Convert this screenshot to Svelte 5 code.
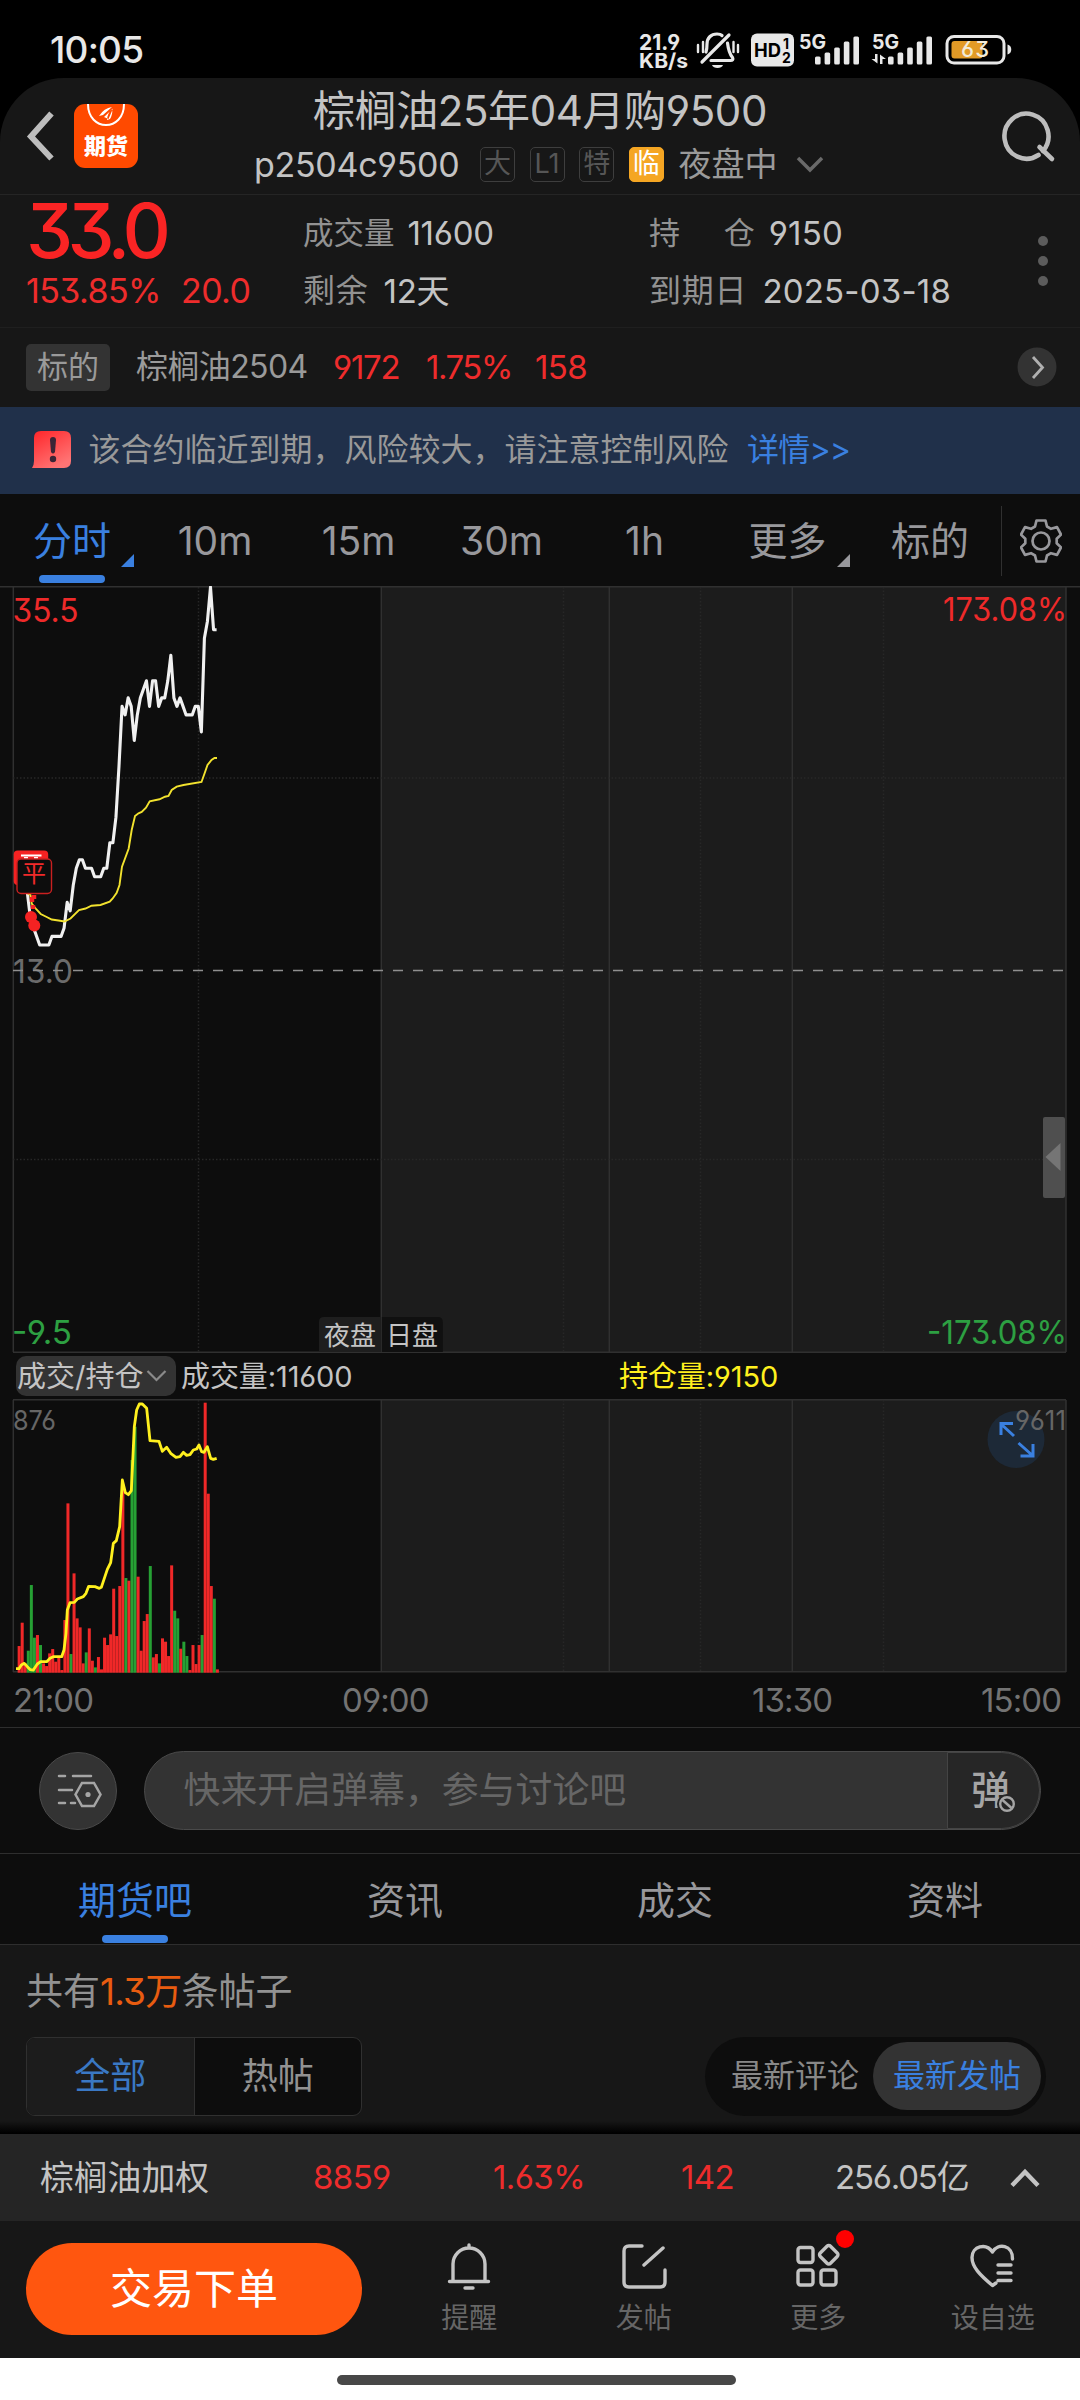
<script lang="ts">
  const periods = [
    { label: "分时", width: 142, active: true, arrow: true },
    { label: "10m", width: 144 },
    { label: "15m", width: 143 },
    { label: "30m", width: 143 },
    { label: "1h", width: 143 },
    { label: "更多", width: 143, arrow: true },
    { label: "标的", width: 142 },
  ];

  const sections = ["期货吧", "资讯", "成交", "资料"];

  // one value per minute from 21:00
  const prices = [
    19, 18.5, 18.5, 18, 17.5, 16, 15.5, 15, 14.5, 14.5, 14.5, 14.5, 15, 15, 15, 15, 15.5, 17, 16.5,
    18, 19, 19.5, 19.5, 19, 19, 19, 18.5, 18.5, 18.5, 19, 19, 20.5, 20.5, 22, 25, 28.5, 28, 29,
    28.5, 26.5, 28, 29, 29.5, 30, 28.5, 30, 30, 28.5, 29, 29, 30, 31.5, 29, 28.5, 29, 28.5, 28, 28,
    28, 28.5, 28.5, 27, 32.5, 33.5, 35.5, 33, 33,
  ];

  const average =
    "17.5,888 30.5,895 31.7,903.5 36.5,909.5 40.7,914 46.7,917 51.7,919.5 58.5,920.5 64.5,921.5 70.5,918.5 79,910 85.5,908.5 91.5,905.7 100.5,905 109.7,901.7 112.7,898.5 116.7,892.7 119.5,885 122,866.7 128.7,848.5 131.7,830 135,816 138.5,813.3 141.7,812 146,807.7 149.7,801.3 159.5,799.3 165,796.7 168.5,796 171.7,790 176.7,786.7 183.5,785 201.5,782 204,775 207.5,765 211.5,760 214.5,758 217,758";

  // negative means the minute closed lower
  const volumes = [
    80, 150, 28, -66, -263, -105, 113, -83, 28, 20, 58, 71, 33, 50, 8, 158, 508, -56, 298, 163,
    136, 28, -61, 133, 36, -16, 47, 10, 105, 83, 115, 252, 110, 260, 548, -284, 276, -638, -738,
    288, 66, 155, 176, -320, 46, 56, -28, 103, 93, 50, 322, -186, -163, 72, -93, -50, 8, 83, 26,
    83, -113, 810, 537, 260, -222, 10,
  ];

  const openInterest =
    "48,866 57,866 64,855 73,850 82,860 91,869 100,870 112,852 122,845 140,845 150,835 160,830 185,830 192,810 198,760 202,690 210,668 223,667 232,657 250,650 258,640 266,619 285,620 298,625 304,622 312,598 322,568 332,548 340,490 349,482 359,440 367,300 376,338 385,344 394,332 403,140 410,90 418,72 427,72 440,85 450,182 477,184 487,214 500,202 512,220 528,232 540,230 550,217 560,226 570,224 580,210 590,207 597,195 605,215 612,217 622,200 632,235 640,238 650,235";

  const minuteX = (i: number) => 15.3 + i * 3.05;
  const priceY = (p: number) => 970.5 - (p - 13) * 17.04;
  const pricePoints = prices.map((p, i) => `${minuteX(i)},${priceY(p)}`).join(" ");
</script>

<div class="screen">
  <div class="status">
    <span class="clock">10:05</span>
    <svg class="status-icons" width="376" height="44" viewBox="638 28 376 44">
      <g fill="#e8e8e8" font-weight="700">
        <text x="639" y="50" font-size="22" textLength="41" lengthAdjust="spacingAndGlyphs">21.9</text>
        <text x="639" y="67.5" font-size="20" textLength="49" lengthAdjust="spacingAndGlyphs">KB/s</text>
        <text x="799" y="48.500" font-size="20" textLength="27" lengthAdjust="spacingAndGlyphs">5G</text>
        <text x="872" y="48.500" font-size="20" textLength="27" lengthAdjust="spacingAndGlyphs">5G</text>
      </g>
      <g fill="none" stroke="#e8e8e8" stroke-width="3.200" stroke-linecap="round">
        <path d="M729 35 702 62M706 52c1-3 1-5 1-8 0-6 4-10 10-10 2 0 4 .5 5 1.500M727.500 43c1 8 2 11 5 14.500 1 2 0 3-2 3H711" />
        <path d="M698 45v7M703 42v10M733.500 42v10M738 45v7" stroke-width="2.400" />
      </g>
      <path d="M712 65h11c-1 4-10 4-11 0z" fill="#e8e8e8" />
      <rect x="751" y="33.500" width="43" height="33" rx="6" fill="#e8e8e8" />
      <g fill="#000" font-weight="700">
        <text x="754" y="56.500" font-size="19" textLength="27" lengthAdjust="spacingAndGlyphs">HD</text>
        <text x="783" y="48.500" font-size="14">1</text>
        <text x="782" y="62.500" font-size="14">2</text>
      </g>
      {#each [815, 888] as left}
        {#each [8, 12, 17, 23, 28] as h, i}
          <rect x={left + i * 9.6} y={64.5 - h} width="5.600" height={h} rx="1.500" fill="#e8e8e8" />
        {/each}
      {/each}
      <path d="M877.500 54v9.500l-6-4.500h3.500v-5zM880 64v-9.500l6 4.500h-3.500v5z" fill="#e8e8e8" />
      <rect x="947" y="36.500" width="57" height="26.500" rx="7" fill="none" stroke="#e8e8e8" stroke-width="3" />
      <path d="M1007.500 44.500c5 1 5 9 0 10z" fill="#e8e8e8" />
      <rect x="951.500" y="41" width="31" height="17.500" rx="3" fill="#e29a26" />
      <text x="961" y="57" font-size="22" font-weight="500" fill="#f2ead8" textLength="28">63</text>
    </svg>
  </div>

  <div class="app">
    <header>
      <svg class="back" width="30" height="52" viewBox="0 0 30 52">
        <path d="M26.500 3.500 6 26.500l20.500 22" fill="none" stroke="#bdbdbd" stroke-width="6" />
      </svg>
      <div class="logo">
        <svg width="64" height="24" viewBox="0 0 64 24">
          <path d="M14 0c0 28 36 28 36 0" fill="none" stroke="#fff" stroke-width="2" />
          <path d="M25 12Q30 4 38 3L29 11zM30 13 39 4.500 34.500 15zM36 15Q39 10 38 5 33 10 33 16z" fill="#fff" />
        </svg>
        <span>期货</span>
      </div>
      <div class="contract">
        <h1>棕榈油25年04月购9500</h1>
        <div class="code-row">
          <span class="code">p2504c9500</span>
          <span class="mark">大</span>
          <span class="mark">L1</span>
          <span class="mark">特</span>
          <span class="mark expiring">临</span>
          <span class="session">夜盘中</span>
          <svg width="28" height="18" viewBox="0 0 28 18">
            <path d="M2 2l12 12L26 2" fill="none" stroke="#6a6a6a" stroke-width="3.500" />
          </svg>
        </div>
      </div>
      <svg class="search" width="54" height="54" viewBox="0 0 54 54">
        <path d="M36.500 46A22 22.500 0 1 1 41 42" fill="none" stroke="#bdbdbd" stroke-width="4.600" stroke-linecap="round" />
        <path d="M37.500 38 50 50" stroke="#bdbdbd" stroke-width="4.600" stroke-linecap="round" />
      </svg>
    </header>

    <section class="quote">
      <div class="last">
        <div class="last-price">33.0</div>
        <div class="change"><span>153.85%</span><span>20.0</span></div>
      </div>
      <div class="stats">
        <div><span class="label tight">成交量</span><b>11600</b></div>
        <div><span class="label">剩余</span><b>12天</b></div>
      </div>
      <div class="stats wide">
        <div><span class="label spread"><i>持</i><i>仓</i></span><b>9150</b></div>
        <div><span class="label">到期日</span><b>2025-03-18</b></div>
      </div>
      <div class="dots"><i></i><i></i><i></i></div>
    </section>

    <section class="underlying">
      <span class="tag">标的</span>
      <span class="name">棕榈油2504</span>
      <span class="up u1">9172</span>
      <span class="up u2">1.75%</span>
      <span class="up u3">158</span>
      <svg width="40" height="40" viewBox="0 0 40 40">
        <circle cx="20" cy="20" r="19.500" fill="#333" />
        <path d="M16 10l9.500 10.500L16 31" fill="none" stroke="#b0b0b0" stroke-width="2.800" />
      </svg>
    </section>

    <section class="alert">
      <svg width="40" height="38" viewBox="0 0 40 38">
        <defs>
          <linearGradient id="warn" x1="0" y1="0" x2=".6" y2="1">
            <stop offset=".1" stop-color="#ff2c30" />
            <stop offset="1" stop-color="#ff7474" />
          </linearGradient>
        </defs>
        <path d="M2 7q0-7 7-7h23q7 0 7 7v23q0 7-7 7H0Q2 34 2 30z" fill="url(#warn)" />
        <path d="M18 9q0-3 3-3t3 3l-1 12q-2 3-4 0z" fill="#3b2536" />
        <circle cx="21" cy="28" r="3.200" fill="#3b2536" />
      </svg>
      <span class="alert-text">该合约临近到期，风险较大，请注意控制风险</span>
      <span class="detail">详情&gt;&gt;</span>
    </section>

    <nav class="periods">
      {#each periods as p}
        <div class="period" class:active={p.active} style="width: {p.width}px">
          <span>{p.label}</span>
          {#if p.arrow}
            <svg class="corner" width="13" height="13"><path d="M13 0v13H0z" fill="currentColor" /></svg>
          {/if}
        </div>
      {/each}
      <div class="settings">
        <svg width="42" height="46" viewBox="-21 -23 42 46" fill="none" stroke="#98989c" stroke-width="2.700" stroke-linejoin="round">
          <path d="M-4.500-20.500h9l1.500 6 4 2.300 6-1.700 4 7.500-4.300 4.200v4.400l4.300 4.200-4 7.500-6-1.700-4 2.300-1.500 6h-9l-1.500-6-4-2.300-6 1.700-4-7.500 4.300-4.200v-4.400l-4.300-4.200 4-7.500 6 1.700 4-2.300z" />
          <circle r="8.500" />
        </svg>
      </div>
    </nav>

    <svg class="price-chart" width="1080" height="767" viewBox="0 586 1080 767">
      <rect x="381" y="586" width="685" height="767" fill="#1c1c1c" />
      <g stroke="#303030" stroke-width="1.500">
        <path d="M0 586.800H1080M13 1352.300H1066M13.300 587V1352M381.300 587V1352M609.300 587V1352M792.300 587V1352M1066 587V1352" />
        <path d="M198.500 587V1352M563.500 587V1352M700.500 587V1352M883.500 587V1352M13 778H1066M13 1159.500H1066" stroke="#272727" stroke-dasharray="1.500 2" />
      </g>
      <g font-size="33">
        <text x="12.500" y="621.500" fill="#ee2a2a" textLength="66" lengthAdjust="spacingAndGlyphs">35.5</text>
        <text x="943" y="621" fill="#ee2a2a" textLength="124" lengthAdjust="spacingAndGlyphs">173.08%</text>
        <text x="13" y="982.500" fill="#6b6b6b" textLength="60" lengthAdjust="spacingAndGlyphs">13.0</text>
        <text x="12" y="1344" fill="#2da042" textLength="60" lengthAdjust="spacingAndGlyphs">-9.5</text>
        <text x="927" y="1344" fill="#2da042" textLength="140" lengthAdjust="spacingAndGlyphs">-173.08%</text>
      </g>
      <path d="M13 970.500H1066" stroke="#8f8f8f" stroke-width="1.600" stroke-dasharray="10 10" />
      <polyline points={pricePoints} fill="none" stroke="#f0f0f0" stroke-width="3.100" stroke-linejoin="round" />
      <polyline points={average} fill="none" stroke="#f2e22e" stroke-width="1.900" />

      <rect x="13.700" y="850.500" width="34.500" height="34.500" rx="4" fill="#f52222" />
      <path d="M21 855.500h20.500M24 858h4M34 858h4" stroke="#fff" stroke-width="1.800" />
      <rect x="17" y="859" width="34.500" height="34.500" rx="4" fill="#0d0d0d" stroke="#c92020" stroke-width="1.400" />
      <text x="22" y="882" font-size="24" fill="#f02a2a">平</text>
      <path d="M34 895v4M32 897v5M33 905v4" stroke="#f52222" stroke-width="4.500" />
      <circle cx="31" cy="917" r="6" fill="#f52222" />
      <circle cx="34.300" cy="925.500" r="6" fill="#f52222" />

      <path d="M381 1352v-35h-57q-5 0-5 5v30z" fill="#1e1e1e" />
      <path d="M381.800 1352v-35h56q5 0 5 5v30z" fill="#101010" />
      <text x="324" y="1344.500" font-size="26" fill="#c4c4c4">夜盘</text>
      <text x="386" y="1344.500" font-size="26" fill="#c4c4c4">日盘</text>
      <rect x="1043" y="1117" width="22" height="81" rx="2" fill="#4f4f4f" />
      <path d="M1060.500 1143v28L1045.500 1157z" fill="#757575" />
    </svg>

    <div class="indicator">
      <div class="selector">
        <span>成交/持仓</span>
        <svg width="22" height="14" viewBox="0 0 22 14">
          <path d="M1.500 2l9 9 9-9" fill="none" stroke="#8a8a8a" stroke-width="2.200" />
        </svg>
      </div>
      <span class="vol-total">成交量:11600</span>
      <span class="oi-total">持仓量:9150</span>
    </div>

    <svg class="volume-chart" width="1080" height="274" viewBox="0 1399 1080 274">
      <rect x="381" y="1399" width="685" height="273" fill="#1c1c1c" />
      <g stroke="#303030" stroke-width="1.500">
        <path d="M13 1399.800H1066M13 1671.800H1066M13.300 1400V1672M381.300 1400V1672M609.300 1400V1672M792.300 1400V1672M1066 1400V1672" />
        <path d="M198.500 1400V1672M563.500 1400V1672M700.500 1400V1672M883.500 1400V1672" stroke="#272727" stroke-dasharray="1.500 2" />
      </g>
      {#each volumes as v, i}
        <rect
          x={minuteX(i + 1) - 0.7}
          y={1672.7 - Math.abs(v) / 3}
          width="3"
          height={Math.abs(v) / 3}
          fill={v > 0 ? "#f02828" : "#26a034"}
        />
      {/each}
      <polyline points={openInterest} transform="translate(0 1380) scale(.33333)" fill="none" stroke="#fff01e" stroke-width="8.500" stroke-linejoin="round" />
      <circle cx="1016" cy="1439.500" r="28.500" fill="#1d2937" />
      <path d="M1014 1436l-13-12M1001 1435v-11.500h12M1018.500 1443l14 12.500M1020.500 1456H1033v-12" fill="none" stroke="#3a80e0" stroke-width="3" />
      <text x="13" y="1430" font-size="27" fill="#666" textLength="43" lengthAdjust="spacingAndGlyphs">876</text>
      <text x="1015" y="1429.500" font-size="27" fill="#666" textLength="51" lengthAdjust="spacingAndGlyphs">9611</text>
    </svg>

    <div class="axis">
      <span>21:00</span>
      <span class="open">09:00</span>
      <span class="noon">13:30</span>
      <span class="close">15:00</span>
    </div>

    <section class="barrage">
      <div class="barrage-settings">
        <svg width="46" height="36" viewBox="0 0 46 36" fill="none" stroke="#a5a5a5" stroke-width="2.500" stroke-linecap="round">
          <path d="M2 3h6M16 3h18M2 17h13M2 30h6M14 30h4" />
          <path d="M25 10h12l6.500 11.500L37 33H25l-6.500-11.500z" />
          <circle cx="31" cy="21.500" r="2.600" fill="#a5a5a5" stroke="none" />
        </svg>
      </div>
      <div class="barrage-input">
        <span class="placeholder">快来开启弹幕，参与讨论吧</span>
        <div class="barrage-toggle">
          <span>弹</span>
          <svg width="22" height="22" viewBox="0 0 22 22">
            <circle cx="11" cy="11" r="10" fill="#262626" />
            <circle cx="11" cy="11" r="6.800" fill="none" stroke="#a5a5a5" stroke-width="2.400" />
            <path d="M6.500 7l9 8" stroke="#a5a5a5" stroke-width="2.400" />
          </svg>
        </div>
      </div>
    </section>

    <nav class="sections">
      {#each sections as s, i}
        <div class:active={i === 0}><span>{s}</span></div>
      {/each}
    </nav>

    <section class="posts">
      <p class="count">共有<em>1.3万</em>条帖子</p>
      <div class="filters">
        <div class="segments">
          <span class="on">全部</span>
          <span>热帖</span>
        </div>
        <div class="sort">
          <span>最新评论</span>
          <span class="on">最新发帖</span>
        </div>
      </div>
    </section>

    <section class="index-bar">
      <span class="i-name">棕榈油加权</span>
      <span class="up">8859</span>
      <span class="up">1.63%</span>
      <span class="up">142</span>
      <span class="turnover">256.05亿</span>
      <svg width="30" height="20" viewBox="0 0 30 20">
        <path d="M2 17.500 15 4l13 13.500" fill="none" stroke="#c4c4c4" stroke-width="4.400" />
      </svg>
    </section>

    <footer>
      <button>交易下单</button>
      <div class="actions">
        <div>
          <svg width="48" height="48" viewBox="0 0 48 48">
            <path d="M8 39V22a16 16 0 0 1 32 0v17M4.500 39.500h39M24 6V3M20 46h8" />
          </svg>
          <span>提醒</span>
        </div>
        <div>
          <svg width="48" height="48" viewBox="0 0 48 48">
            <path d="M22 4H9Q4 4 4 9v31q0 5 5 5h31q5 0 5-5V28M43 6 24 23" />
          </svg>
          <span>发帖</span>
        </div>
        <div>
          <svg width="48" height="48" viewBox="0 0 48 48">
            <rect x="4" y="5.500" width="15" height="15" rx="2.500" />
            <rect x="4" y="28" width="15" height="15" rx="2.500" />
            <rect x="27" y="28" width="15" height="15" rx="2.500" />
            <rect x="27.500" y="5.500" width="14.500" height="14.500" rx="2.500" transform="rotate(45 34.750 12.750)" />
          </svg>
          <i class="unread"></i>
          <span>更多</span>
        </div>
        <div>
          <svg width="48" height="48" viewBox="0 0 48 48">
            <path d="M27 41l-3.500 2.500C11 33 3 25 3 15.500 3 4 17 .500 23.500 10 29 .500 44 3 43.500 17M29 23h13M29 31h13M29 38.500h13" />
          </svg>
          <span>设自选</span>
        </div>
      </div>
    </footer>
  </div>
  <div class="home"><i></i></div>
</div>

<style>
  :global(body) {
    background: #000;
  }

  .screen {
    width: 1080px;
    height: 2400px;
    overflow: hidden;
    background: #000;
    color: #c4c4c4;
    font-family: "Inter", "Noto Sans CJK SC", sans-serif;
    font-feature-settings: "cv03", "cv04", "cv09";
    font-size: 33px;
    line-height: 1;
    white-space: nowrap;
  }

  .screen svg {
    display: block;
    flex: none;
  }

  i,
  em {
    font-style: normal;
  }

  b {
    font-weight: 400;
  }

  .status {
    height: 78px;
    display: flex;
    justify-content: space-between;
    box-sizing: border-box;
    padding: 28px 66px 0 50px;
  }

  .clock {
    font-size: 37px;
    line-height: 44px;
    font-weight: 500;
    letter-spacing: -0.8px;
    color: #e8e8e8;
  }

  .app {
    background: #171717;
    border-radius: 64px 64px 0 0;
    height: 2280px;
    overflow: hidden;
  }

  header {
    height: 117px;
    display: flex;
    align-items: center;
    box-sizing: border-box;
    border-bottom: 1px solid #252525;
    padding: 0 24px 0 25px;
  }

  .logo {
    flex: none;
    width: 64px;
    height: 64px;
    margin-left: 19px;
    border-radius: 11px;
    background: #ff4a00;
    overflow: hidden;
    text-align: center;
    color: #fff;
    font-size: 22px;
    font-weight: 900;
  }

  .logo span {
    display: block;
    margin-top: 7px;
  }

  .contract {
    flex: 1;
    height: 117px;
    display: flex;
    flex-direction: column;
    align-items: center;
    padding-right: 60px;
  }

  h1 {
    margin: 5px 0 0;
    font-size: 42px;
    font-weight: 400;
    line-height: 56px;
    letter-spacing: -0.4px;
  }

  .code-row {
    width: 572px;
    height: 52px;
    display: flex;
    align-items: center;
  }

  .code {
    flex: none;
    font-size: 34px;
    width: 226px;
    letter-spacing: -0.3px;
  }

  .mark {
    flex: none;
    width: 35px;
    height: 35px;
    box-sizing: border-box;
    margin-right: 14.6px;
    border: 1.5px solid #3e3e3e;
    border-radius: 5px;
    color: #565656;
    font-size: 27px;
    line-height: 32px;
    text-align: center;
  }

  .mark.expiring {
    background: #f5a623;
    border-color: #f5a623;
    color: #fff;
  }

  .session {
    flex: none;
    color: #9a9a9a;
    font-size: 33px;
    width: 118px;
  }

  .quote {
    height: 133px;
    display: flex;
    box-sizing: border-box;
    border-bottom: 1px solid #1f1f1f;
    padding-left: 26px;
  }

  .last {
    width: 277px;
    color: #fa2424;
  }

  .last-price {
    font-size: 75px;
    font-weight: 500;
    line-height: 72px;
    letter-spacing: -5.6px;
  }

  .change {
    display: flex;
    color: #ee2c2c;
    font-size: 34px;
    line-height: 48px;
    letter-spacing: -0.6px;
  }

  .change span:first-child {
    width: 155px;
  }

  .stats {
    width: 346px;
    padding-top: 9px;
  }

  .stats div {
    height: 58px;
    line-height: 58px;
    display: flex;
  }

  .stats b {
    letter-spacing: -0.3px;
  }

  .label {
    margin-right: 15px;
    color: #929292;
    font-size: 32px;
    letter-spacing: 0.8px;
  }

  .label.tight {
    font-size: 30.5px;
    letter-spacing: 0;
    margin-right: 13px;
  }

  .label.spread {
    display: flex;
    gap: 43px;
    margin-right: 13px;
    font-size: 31px;
  }

  .stats.wide {
    width: 389px;
  }

  .stats.wide b {
    letter-spacing: 0.2px;
  }

  .dots {
    display: flex;
    flex-direction: column;
    gap: 10px;
    padding-top: 41px;
  }

  .dots i {
    width: 10px;
    height: 10px;
    border-radius: 50%;
    background: #5c5c5c;
  }

  .underlying {
    height: 79px;
    display: flex;
    align-items: center;
    box-sizing: border-box;
    padding: 0 23px 1px 26px;
    color: #9a9a9a;
  }

  .tag {
    width: 84px;
    height: 47px;
    margin-right: 26px;
    border-radius: 5px;
    background: #333;
    font-size: 31px;
    line-height: 45px;
    text-align: center;
  }

  .name {
    width: 197px;
    font-size: 32px;
    letter-spacing: -0.6px;
  }

  .up {
    color: #ee2c2c;
  }

  .u1 {
    width: 93px;
    letter-spacing: -1.3px;
  }

  .u2 {
    width: 109px;
    letter-spacing: -1.5px;
  }

  .u3 {
    flex: 1;
    letter-spacing: -0.6px;
  }

  .alert {
    height: 87px;
    display: flex;
    align-items: center;
    box-sizing: border-box;
    background: #20304a;
    padding: 0 0 2px 32px;
    font-size: 32px;
    color: #999;
  }

  .alert-text {
    margin-left: 16.5px;
    width: 658.5px;
  }

  .detail {
    color: #3a80e0;
    letter-spacing: -0.8px;
  }

  .periods {
    height: 92px;
    display: flex;
    box-sizing: border-box;
    padding-left: 1px;
    background: #0d0d0d;
    color: #98989c;
    font-size: 39px;
  }

  .period {
    position: relative;
    display: flex;
    justify-content: center;
    line-height: 94px;
  }

  .period.active,
  .sections .active {
    color: #3a80e0;
  }

  .period.active::after,
  .sections .active::after {
    content: "";
    position: absolute;
    left: 50%;
    bottom: 3px;
    width: 66px;
    height: 8px;
    margin-left: -33px;
    border-radius: 4px;
    background: #3a80e0;
  }

  .corner {
    position: absolute;
    right: 9.5px;
    bottom: 19px;
  }

  .settings {
    flex: 1;
    height: 70px;
    margin-top: 12px;
    display: flex;
    align-items: center;
    justify-content: center;
    border-left: 1px solid #303030;
  }

  .price-chart,
  .volume-chart {
    background: #0d0d0d;
  }

  .indicator {
    height: 46px;
    display: flex;
    align-items: center;
    background: #0d0d0d;
    padding-left: 16px;
    font-size: 29px;
  }

  .selector {
    width: 160px;
    height: 40px;
    display: flex;
    align-items: center;
    border-radius: 10px;
    background: #333;
  }

  .selector span {
    width: 129px;
    padding-left: 1px;
  }

  .vol-total {
    width: 438px;
    margin-left: 5px;
    letter-spacing: -0.1px;
  }

  .oi-total {
    color: #fff01e;
    letter-spacing: -0.1px;
  }

  .axis {
    height: 55px;
    display: flex;
    align-items: center;
    box-sizing: border-box;
    padding-left: 13px;
    background: #0d0d0d;
    border-bottom: 1px solid #2e2e2e;
    color: #737373;
  }

  .axis span {
    width: 329px;
    letter-spacing: -0.9px;
  }

  .axis .open {
    width: 410px;
  }

  .axis .noon {
    width: 229px;
  }

  .axis .close {
    width: auto;
  }

  .barrage {
    height: 126px;
    display: flex;
    align-items: center;
    box-sizing: border-box;
    padding-left: 39px;
    background: #0d0d0d;
    border-bottom: 1px solid #2e2e2e;
  }

  .barrage-settings {
    width: 78px;
    height: 78px;
    box-sizing: border-box;
    display: flex;
    align-items: center;
    justify-content: center;
    padding-left: 4px;
    border: 1px solid #4a4a4a;
    border-radius: 50%;
    background: #333;
  }

  .barrage-input {
    width: 897px;
    height: 79px;
    margin-left: 27px;
    box-sizing: border-box;
    display: flex;
    border: 1px solid #4a4a4a;
    border-radius: 40px;
    background: #333;
    overflow: hidden;
  }

  .placeholder {
    flex: 1;
    padding-left: 38.5px;
    color: #666;
    font-size: 36.9px;
    line-height: 76px;
  }

  .barrage-toggle {
    position: relative;
    width: 93px;
    box-sizing: border-box;
    border: 1.5px solid #444;
    border-radius: 0 39px 39px 0;
    background: #262626;
    color: #a5a5a5;
    font-size: 39px;
    font-weight: 500;
    line-height: 74px;
  }

  .barrage-toggle span {
    margin-left: 23px;
  }

  .barrage-toggle svg {
    position: absolute;
    left: 48px;
    top: 40px;
  }

  .sections {
    height: 91px;
    display: flex;
    box-sizing: border-box;
    background: #0d0d0d;
    border-bottom: 1px solid #2e2e2e;
    color: #98989c;
    font-size: 38px;
    line-height: 92px;
  }

  .sections div {
    position: relative;
    flex: 1;
    text-align: center;
  }

  .sections .active::after {
    bottom: 1px;
  }

  .posts {
    height: 189px;
    box-sizing: border-box;
    padding: 24px 34px 0 26px;
    background: linear-gradient(#171717 176px, #000 188px);
  }

  .count {
    margin: 0 0 22px;
    color: #929292;
    font-size: 37px;
    line-height: 46px;
  }

  .count em {
    color: #e85c10;
    letter-spacing: -0.8px;
  }

  .filters {
    display: flex;
    justify-content: space-between;
  }

  .segments {
    width: 336px;
    height: 79px;
    box-sizing: border-box;
    display: flex;
    border: 1px solid #303030;
    border-radius: 9px;
    background: #0d0d0d;
    overflow: hidden;
    color: #929292;
    font-size: 36px;
    line-height: 77px;
    text-align: center;
  }

  .segments span {
    flex: 1;
  }

  .segments .on {
    background: #1c1c1c;
    border-right: 1px solid #303030;
    color: #3a78c4;
  }

  .sort {
    width: 341px;
    height: 79px;
    box-sizing: border-box;
    display: flex;
    justify-content: flex-end;
    padding: 5px;
    border-radius: 40px;
    background: #0d0d0d;
    color: #888;
    font-size: 32px;
    line-height: 68px;
  }

  .sort span {
    margin-right: 14px;
  }

  .sort .on {
    width: 168px;
    height: 68px;
    margin: 0;
    border-radius: 34px;
    background: #333;
    color: #3a80e0;
    text-align: center;
  }

  .index-bar {
    height: 87px;
    display: grid;
    grid-template-columns: 273px 180px 188px 154px 175px 30px;
    align-items: center;
    background: #252525;
    padding-left: 40px;
    letter-spacing: -0.6px;
  }

  .i-name {
    font-size: 33.8px;
    letter-spacing: 0;
  }

  .turnover {
    letter-spacing: -1.2px;
  }

  footer {
    height: 137px;
    display: flex;
    padding-left: 26px;
  }

  button {
    width: 336px;
    height: 92px;
    margin: 22px 20px 0 0;
    padding: 0;
    border: 0;
    border-radius: 46px;
    background: #ff560f;
    color: #fff;
    font: 42px "Inter", "Noto Sans CJK SC", sans-serif;
    line-height: 88px;
  }

  .actions {
    flex: 1;
    display: grid;
    grid-template-columns: repeat(4, 1fr);
  }

  .actions div {
    position: relative;
    display: flex;
    flex-direction: column;
    align-items: center;
    padding-top: 21px;
    color: #666;
    font-size: 28px;
  }

  .actions svg {
    fill: none;
    stroke: #c4c4c4;
    stroke-width: 3.4;
    stroke-linecap: round;
    stroke-linejoin: round;
  }

  .actions span {
    margin-top: 14px;
  }

  .unread {
    position: absolute;
    left: 105px;
    top: 9px;
    width: 18px;
    height: 18px;
    border-radius: 50%;
    background: #f00;
  }

  .home {
    height: 42px;
    background: #fff;
    display: flex;
    justify-content: center;
  }

  .home i {
    width: 399px;
    height: 10px;
    margin: 17px 7px 0 0;
    border-radius: 5px;
    background: #484848;
  }
</style>
